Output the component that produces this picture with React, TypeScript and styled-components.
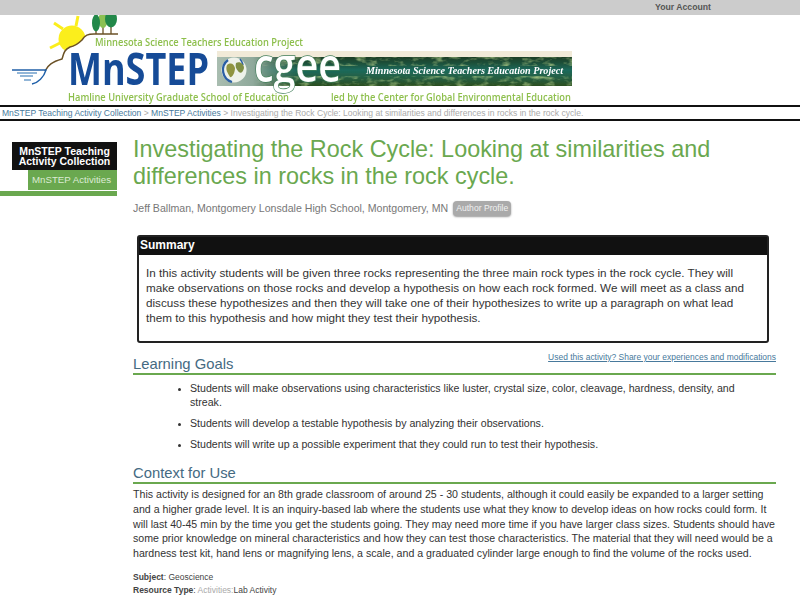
import React from "react";
import styled, { createGlobalStyle } from "styled-components";

const GlobalStyle = createGlobalStyle`
  html, body {
    margin: 0;
    padding: 0;
    background: #ffffff;
    overflow: hidden;
  }
  body {
    font-family: "Liberation Sans", Arial, sans-serif;
  }
`;

const Page = styled.div`
  width: 800px;
  height: 600px;
  overflow: hidden;
`;

const TopBar = styled.div`
  height: 15px;
  background: #cccccc;
  display: flex;
  justify-content: flex-end;
  padding-right: 89px;
`;

const AccountLink = styled.a`
  font-size: 8.7px;
  font-weight: bold;
  line-height: 15px;
  color: #555555;
`;

const Banner = styled.div`
  height: 90px;
`;

const Crumbs = styled.div`
  height: 12px;
  border-top: 2px solid #111111;
  border-bottom: 2px solid #111111;
  padding-left: 2px;
  font-size: 8.55px;
  line-height: 12px;
  color: #aaaaaa;
  white-space: nowrap;
`;

const CrumbLink = styled.a`
  color: #47799c;
`;

const Columns = styled.div`
  display: flex;
`;

const Sidebar = styled.div`
  width: 117px;
  flex-shrink: 0;
  padding-top: 21px;
`;

const NavTitle = styled.div`
  margin-left: 12px;
  height: 28px;
  background: #111111;
  color: #ffffff;
  font-size: 10.5px;
  font-weight: bold;
  line-height: 10px;
  text-align: center;
  padding-top: 4px;
  box-sizing: border-box;
`;

const NavItem = styled.div`
  margin-left: 28px;
  padding-right: 2px;
  height: 20px;
  background: #6aa84f;
  color: #dcebd4;
  font-size: 9.7px;
  line-height: 20px;
  text-align: center;
`;

const NavFoot = styled.div`
  height: 5px;
  margin-top: 1px;
  background: #6aa84f;
`;

const Main = styled.div`
  width: 643px;
  margin-left: 16px;
  padding-top: 15px;
`;

const Title = styled.h1`
  margin: 0;
  font-size: 23.4px;
  font-weight: normal;
  line-height: 27px;
  color: #6aa84f;
`;

const AuthorRow = styled.div`
  display: flex;
  align-items: center;
  margin-top: 11px;
  font-size: 10.6px;
  line-height: 15px;
  color: #777777;
`;

const Badge = styled.span`
  margin-left: 5px;
  padding: 0 3px;
  height: 15px;
  border-radius: 4px;
  background: #aaaaaa;
  box-shadow: 0 1px 2px #999999;
  color: #f0f0f0;
  font-size: 8.6px;
  line-height: 15px;
`;

const SummaryBox = styled.div`
  margin: 19px 7px 0 4px;
  border: 2px solid #222222;
  border-radius: 3px;
  height: 108px;
  box-sizing: border-box;
`;

const SummaryHead = styled.div`
  height: 18px;
  background: #111111;
  color: #ffffff;
  font-size: 12px;
  font-weight: bold;
  line-height: 16px;
  padding-left: 1px;
`;

const SummaryText = styled.p`
  margin: 10px 6px 0 7px;
  font-size: 11.7px;
  line-height: 15px;
  color: #333333;
`;

const ShareRow = styled.div`
  display: flex;
  justify-content: flex-end;
  height: 0;
`;

const ShareLink = styled.a`
  margin-top: 8px;
  font-size: 8.46px;
  line-height: 12px;
  color: #47799c;
  text-decoration: underline;
`;

const Heading = styled.h2<{ $top: number }>`
  margin: ${(p) => p.$top}px 0 0;
  padding-bottom: 1px;
  font-size: 14.8px;
  font-weight: normal;
  line-height: 16px;
  color: #456a82;
  border-bottom: 2px solid #6aa84f;
`;

const Goals = styled.ul`
  margin: 6px 0 0;
  padding: 0 36px 0 57px;
  font-size: 10.62px;
  line-height: 14px;
  color: #333333;
`;

const Goal = styled.li`
  margin-bottom: 7px;
  &::marker {
    font-size: 9px;
  }
`;

const Body = styled.p`
  margin: 3px 0 0;
  font-size: 10.62px;
  line-height: 14.8px;
  color: #333333;
`;

const Meta = styled.div<{ $top: number }>`
  margin-top: ${(p) => p.$top}px;
  font-size: 8.5px;
  line-height: 12px;
  color: #444444;
`;

const Muted = styled.span`
  color: #aaaaaa;
`;

const Logo = () => (
  <svg width="580" height="90" viewBox="0 0 580 90">
    <defs>
      <filter id="soft">
        <feGaussianBlur stdDeviation="0.35" />
      </filter>
      <filter id="foliage" x="0" y="0" width="100%" height="100%">
        <feTurbulence type="fractalNoise" baseFrequency="0.09 0.2" numOctaves="3" seed="4" />
        <feColorMatrix values="0 0 0 0 0.38  0 0 0 0 0.55  0 0 0 0 0.22  2.2 0 0 0 -1.05" />
      </filter>
      <linearGradient id="photo" x1="0" y1="0" x2="0" y2="1">
        <stop offset="0" stopColor="#1c3d26" />
        <stop offset="0.2" stopColor="#1f4f38" />
        <stop offset="0.45" stopColor="#1c6a5c" />
        <stop offset="0.7" stopColor="#245f44" />
        <stop offset="1" stopColor="#2c4f22" />
      </linearGradient>
      <linearGradient id="fade" x1="0" y1="0" x2="1" y2="0">
        <stop offset="0" stopColor="#a9bdb0" />
        <stop offset="0.45" stopColor="#8fa99b" />
        <stop offset="1" stopColor="#6f9180" stopOpacity="0" />
      </linearGradient>
    </defs>
    <g filter="url(#soft)">
      {/* sun, cut off by the hill */}
      <path d="M78 1 L76 11 M54 8 L63 14 M50 33 L60 28" stroke="#fbee1f" strokeWidth="3" fill="none" />
      <circle cx="72" cy="24" r="13.5" fill="#fbee1f" />
      <path d="M45 56 C48 50 52 47 62 44 C64 38 64 35 70 32 C76 31 79 28 82 25 C85 20 88 19 94 19 L118 19 L118 50 L45 60 Z" fill="#ffffff" />
      {/* hill */}
      <path d="M45 56 C48 50 52 47 62 44 C64 38 64 35 70 32 C76 31 79 28 82 25 C85 20 88 19 94 19 L118 19" stroke="#6b5126" strokeWidth="1.5" fill="none" />
      {/* shore */}
      <path d="M12 55 L46 55 C44 62 38 68 32 69" stroke="#1f5fa8" strokeWidth="1.4" fill="none" />
      <path d="M17 58 L37 58 M20 61 L33 61 M24 65 L31 65" stroke="#6f9fcb" strokeWidth="1.3" />
      {/* trees */}
      <path d="M96 10 V19 M103 10 V19 M111 10 V19" stroke="#6b5126" strokeWidth="1.3" />
      <ellipse cx="103" cy="5" rx="4.5" ry="8" fill="#8cc152" />
      <ellipse cx="96" cy="8" rx="4" ry="8.5" fill="#23884a" />
      <ellipse cx="111" cy="4" rx="6" ry="8.5" fill="#23884a" />
      {/* cgee photo strip */}
      <rect x="217" y="36" width="355" height="6" fill="#f1ead8" />
      <rect x="217" y="42" width="355" height="29" fill="url(#photo)" />
      <rect x="217" y="42" width="355" height="9" filter="url(#foliage)" />
      <rect x="217" y="61" width="355" height="10" filter="url(#foliage)" />
      <rect x="217" y="42" width="80" height="29" fill="url(#fade)" />
      {/* globe */}
      <circle cx="234" cy="55" r="12.5" fill="#eef2ea" />
      <path d="M228 45 A12.5 12.5 0 0 0 232 67" stroke="#2b5fa5" strokeWidth="2.2" fill="none" />
      <path d="M240 44 A12.5 12.5 0 0 1 243 50" stroke="#2b5fa5" strokeWidth="1.6" fill="none" />
      <path d="M227 50 C231 47 234 49 235 53 C235 58 232 63 230 62 C228 58 225 55 227 50 Z" fill="#8f9440" />
      <path d="M236 48 C240 46 244 49 244 53 C243 58 240 59 238 56 C236 54 235 51 236 48 Z" fill="#7f8f45" />
      <text x="254" y="67" fontFamily='"Open Sans", sans-serif' fontWeight="600" fontSize="47" fill="#ffffff" stroke="#3f7d58" strokeWidth="1.4" paintOrder="stroke" textLength="87" lengthAdjust="spacingAndGlyphs">cgee</text>
      <text x="366" y="59" fontFamily='"Liberation Serif", serif' fontStyle="italic" fontWeight="bold" fontSize="10" fill="#ffffff" textLength="197" lengthAdjust="spacingAndGlyphs">Minnesota Science Teachers Education Project</text>
      <g fontFamily='"Open Sans", sans-serif' fontWeight="600" fill="#8dbf4c" fontSize="10.5">
        <text x="95" y="30.5" textLength="208" lengthAdjust="spacingAndGlyphs">Minnesota Science Teachers Education Project</text>
        <text x="68" y="86" textLength="221" lengthAdjust="spacingAndGlyphs">Hamline University Graduate School of Education</text>
        <text x="331" y="86" textLength="240" lengthAdjust="spacingAndGlyphs">led by the Center for Global Environmental Education</text>
      </g>
      <text x="68" y="70" fontFamily='"Open Sans", sans-serif' fontWeight="bold" fontSize="44" fill="#144b97" textLength="141" lengthAdjust="spacingAndGlyphs">MnSTEP</text>
    </g>
  </svg>
);

export default function App() {
  return (
    <Page>
      <GlobalStyle />
      <TopBar>
        <AccountLink>Your Account</AccountLink>
      </TopBar>
      <Banner>
        <Logo />
      </Banner>
      <Crumbs>
        <CrumbLink>MnSTEP Teaching Activity Collection</CrumbLink> &gt; <CrumbLink>MnSTEP Activities</CrumbLink> &gt; Investigating the Rock Cycle: Looking at similarities and differences in rocks in the rock cycle.
      </Crumbs>
      <Columns>
        <Sidebar>
          <NavTitle>MnSTEP Teaching<br />Activity Collection</NavTitle>
          <NavItem>MnSTEP Activities</NavItem>
          <NavFoot />
        </Sidebar>
        <Main>
          <Title>Investigating the Rock Cycle: Looking at similarities and differences in rocks in the rock cycle.</Title>
          <AuthorRow>
            Jeff Ballman, Montgomery Lonsdale High School, Montgomery, MN
            <Badge>Author Profile</Badge>
          </AuthorRow>
          <SummaryBox>
            <SummaryHead>Summary</SummaryHead>
            <SummaryText>
              In this activity students will be given three rocks representing the three main rock types in the rock cycle. They will make observations on those rocks and develop a hypothesis on how each rock formed. We will meet as a class and discuss these hypothesizes and then they will take one of their hypothesizes to write up a paragraph on what lead them to this hypothesis and how might they test their hypothesis.
            </SummaryText>
          </SummaryBox>
          <ShareRow>
            <ShareLink>Used this activity? Share your experiences and modifications</ShareLink>
          </ShareRow>
          <Heading $top={13}>Learning Goals</Heading>
          <Goals>
            <Goal>Students will make observations using characteristics like luster, crystal size, color, cleavage, hardness, density, and streak.</Goal>
            <Goal>Students will develop a testable hypothesis by analyzing their observations.</Goal>
            <Goal>Students will write up a possible experiment that they could run to test their hypothesis.</Goal>
          </Goals>
          <Heading $top={14}>Context for Use</Heading>
          <Body>
            This activity is designed for an 8th grade classroom of around 25 - 30 students, although it could easily be expanded to a larger setting and a higher grade level. It is an inquiry-based lab where the students use what they know to develop ideas on how rocks could form. It will last 40-45 min by the time you get the students going. They may need more time if you have larger class sizes. Students should have some prior knowledge on mineral characteristics and how they can test those characteristics. The material that they will need would be a hardness test kit, hand lens or magnifying lens, a scale, and a graduated cylinder large enough to find the volume of the rocks used.
          </Body>
          <Meta $top={10}><b>Subject</b>: Geoscience</Meta>
          <Meta $top={1}><b>Resource Type</b>: <Muted>Activities:</Muted>Lab Activity</Meta>
        </Main>
      </Columns>
    </Page>
  );
}
